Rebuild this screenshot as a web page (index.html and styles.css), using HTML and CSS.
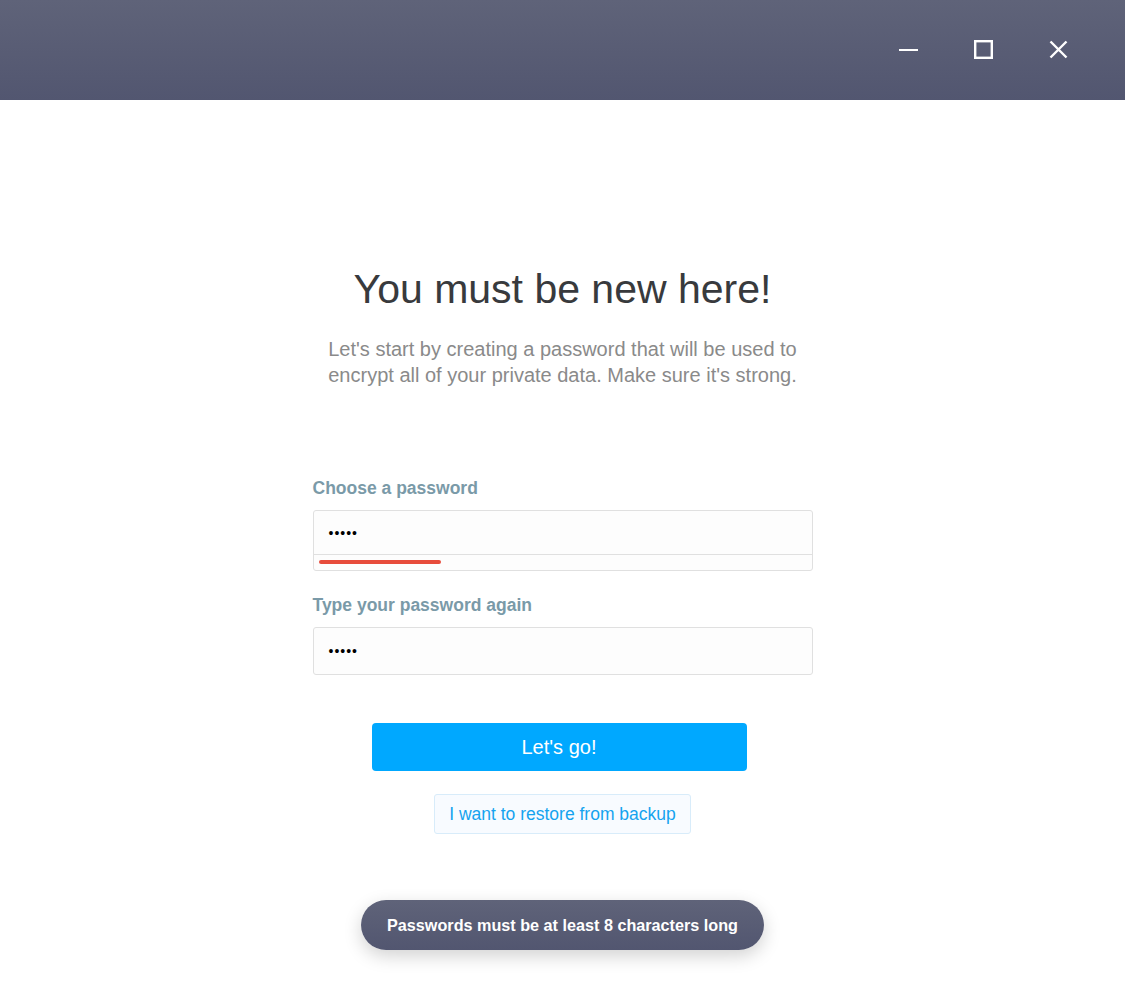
FILE: index.html
```html
<!DOCTYPE html>
<html>
<head>
<meta charset="utf-8">
<link rel="stylesheet" href="styles.css">
</head>
<body>
<div class="titlebar">
  <div class="win-controls">
    <button class="win-btn" aria-label="Minimize">
      <svg width="20" height="20" viewBox="0 0 20 20"><rect x="0" y="9" width="19" height="2" fill="#fff"/></svg>
    </button>
    <button class="win-btn" aria-label="Maximize">
      <svg width="20" height="20" viewBox="0 0 20 20"><rect x="1.2" y="1.2" width="16.6" height="16.6" fill="none" stroke="#fff" stroke-width="2.4"/></svg>
    </button>
    <button class="win-btn" aria-label="Close">
      <svg width="20" height="20" viewBox="0 0 20 20"><path d="M1.5 1.5 L17.5 17.5 M17.5 1.5 L1.5 17.5" stroke="#fff" stroke-width="2.4"/></svg>
    </button>
  </div>
</div>
<main class="content">
  <h1 class="title">You must be new here!</h1>
  <p class="subtitle">Let's start by creating a password that will be used to<br>encrypt all of your private data. Make sure it's strong.</p>
  <form class="form">
    <label class="label">Choose a password</label>
    <div class="field field-first">
      <div class="field-input field-input-short">•••••</div>
      <div class="strength"><div class="strength-bar" style="width:122px"></div></div>
    </div>
    <label class="label">Type your password again</label>
    <div class="field">
      <div class="field-input">•••••</div>
    </div>
  </form>
  <button class="primary">Let's go!</button>
  <button class="secondary">I want to restore from backup</button>
  <div class="toast">Passwords must be at least 8 characters long</div>
</main>
</body>
</html>
```
FILE: styles.css
```css
* { box-sizing: border-box; }
html, body { margin: 0; padding: 0; }
body {
  width: 1125px;
  height: 1000px;
  background: #fff;
  font-family: "Liberation Sans", Arial, sans-serif;
  overflow: hidden;
}
.titlebar {
  height: 100px;
  background: linear-gradient(to bottom, #5f6379, #525670);
  display: flex;
  justify-content: flex-end;
  align-items: center;
  padding-right: 56px;
}
.win-controls {
  display: flex;
  gap: 55px;
}
.win-btn {
  width: 20px;
  height: 20px;
  padding: 0;
  border: 0;
  background: none;
  display: flex;
}
.content {
  display: flex;
  flex-direction: column;
  align-items: center;
  padding-top: 165px;
}
.title {
  margin: 0;
  font-weight: 400;
  font-size: 41px;
  line-height: 48px;
  color: #383a3d;
}
.subtitle {
  margin: 23px 0 0;
  text-align: center;
  font-size: 20px;
  line-height: 26px;
  color: #8a8a8a;
}
.form {
  width: 500px;
  margin-top: 90px;
  display: flex;
  flex-direction: column;
}
.label {
  font-weight: 700;
  font-size: 17.5px;
  line-height: 20px;
  color: #7a9aa8;
  margin-bottom: 12px;
}
.field {
  border: 1px solid #e0e0e0;
  border-radius: 3px;
  background: #fdfdfd;
  margin-bottom: 26px;
}
.field-first { margin-bottom: 24px; }
.field-input {
  height: 46px;
  padding: 0 15px;
  display: flex;
  align-items: center;
  font-size: 14px;
  letter-spacing: 1px;
  color: #000;
}
.field-input-short { height: 43px; }
.strength {
  border-top: 1px solid #e0e0e0;
  height: 16px;
  padding: 5px 5px 0;
}
.strength-bar {
  height: 4px;
  border-radius: 2px;
  background: #e74c3c;
}
.primary {
  margin-top: 22px;
  margin-right: 7px;
  width: 375px;
  height: 48px;
  border: 0;
  border-radius: 4px;
  background: #00a8ff;
  color: #fff;
  font-family: inherit;
  font-size: 20px;
}
.secondary {
  margin-top: 23px;
  height: 40px;
  padding: 0 14px;
  border: 1px solid #d8ecfa;
  border-radius: 3px;
  background: #f8fbff;
  color: #15a3ef;
  font-family: inherit;
  font-size: 17.5px;
}
.toast {
  margin-top: 66px;
  height: 50px;
  padding: 0 26px;
  border-radius: 25px;
  background: linear-gradient(to bottom, #5f6379, #525670);
  color: #fff;
  font-weight: 700;
  font-size: 16.2px;
  display: flex;
  align-items: center;
  box-shadow: 0 6px 18px rgba(0,0,0,0.18);
}
```
